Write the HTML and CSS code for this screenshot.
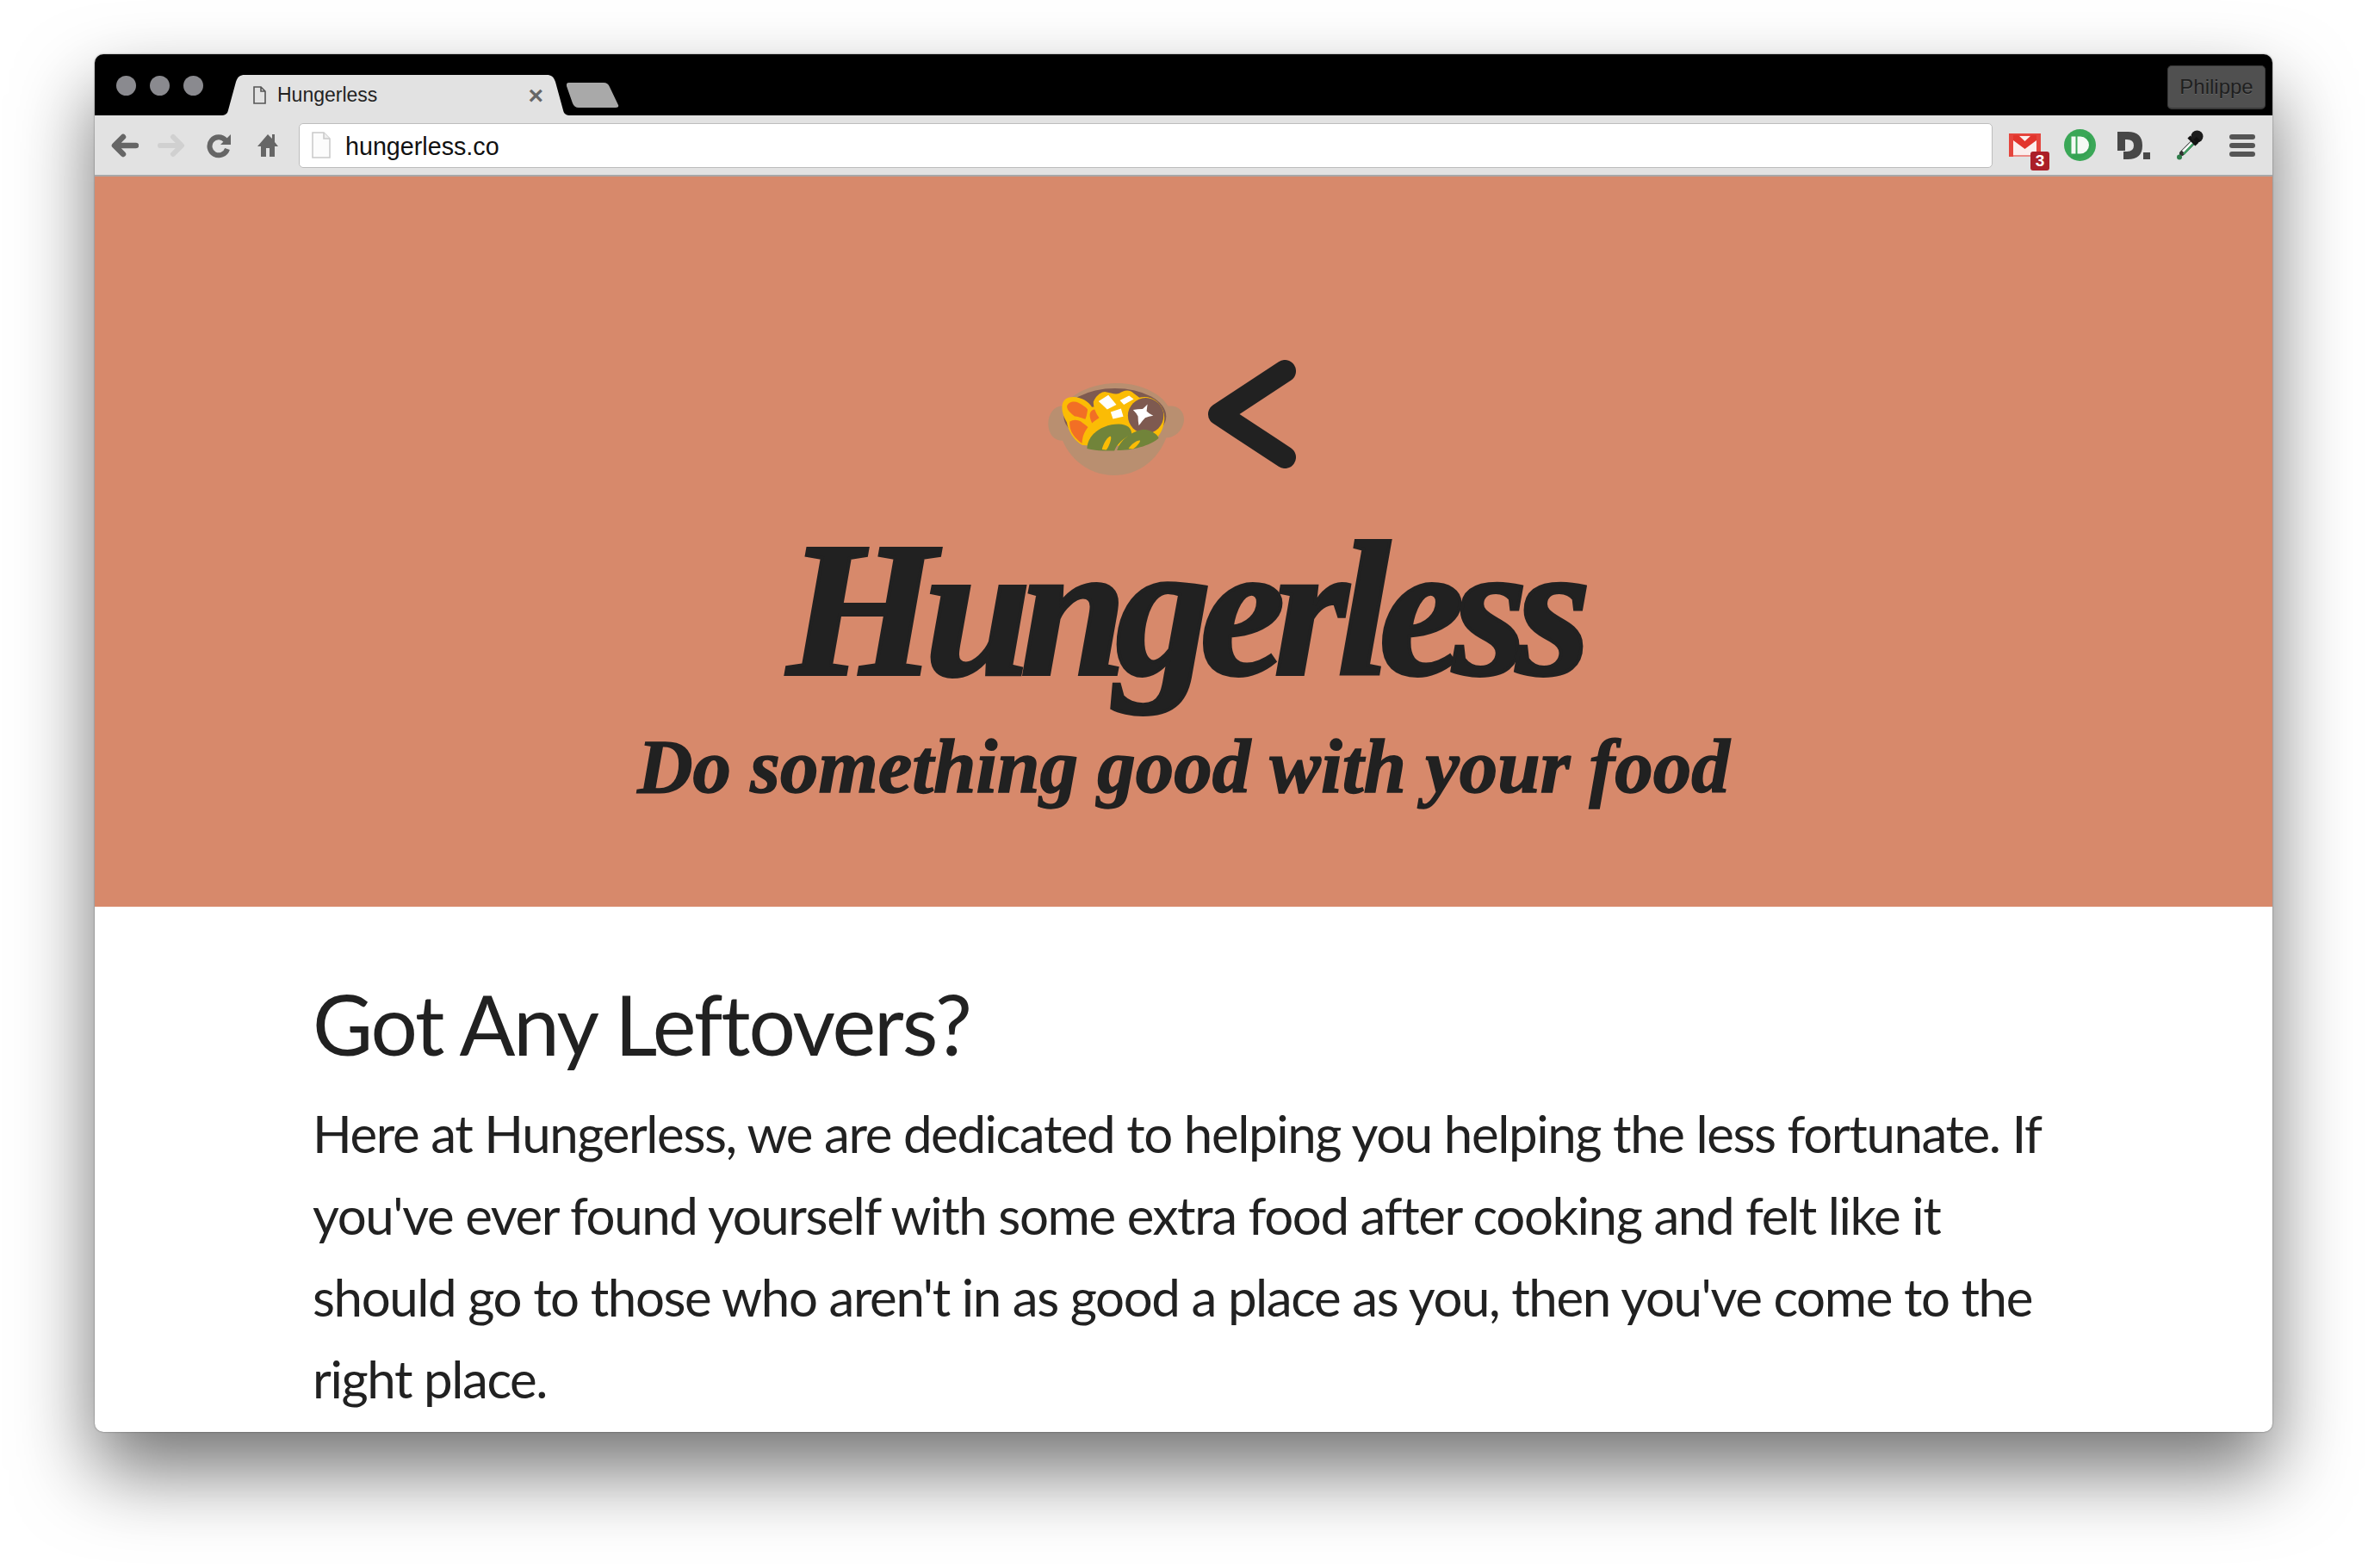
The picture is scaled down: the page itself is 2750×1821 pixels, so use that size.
FILE: index.html
```html
<!DOCTYPE html>
<html>
<head>
  <title>Hungerless</title>
  <link rel="stylesheet" href="styles.css">
</head>
<body>

<div class="window">

  <div class="titlebar">
    <div class="lights">
      <span class="light"></span>
      <span class="light"></span>
      <span class="light"></span>
    </div>
    <div class="tab">
      <svg class="tab-icon" viewBox="0 0 15 21"><path d="M1 1h8l5 5v14H1z M9 1v5h5" fill="none" stroke="#555" stroke-width="1.6"/></svg>
      <span class="tab-title">Hungerless</span>
      <span class="tab-close">&times;</span>
    </div>
    <svg class="new-tab" viewBox="0 0 61 29"><path d="M3 0h40q5 0 7 5l10 21q1 3-3 3H14q-5 0-7-5L0 4q-1-4 3-4z" fill="#a9a9a9"/></svg>
    <div class="profile">Philippe</div>
  </div>

  <div class="toolbar">
    <svg class="tool tool-back" viewBox="0 0 32 30"><path d="M14 5 4 15l10 10M5 15h24" fill="none" stroke="#666" stroke-width="6.500" stroke-linejoin="round" stroke-linecap="round"/></svg>
    <svg class="tool" viewBox="0 0 32 30"><path d="M18 5l10 10-10 10M27 15H3" fill="none" stroke="#d0d0d0" stroke-width="6" stroke-linejoin="round" stroke-linecap="round"/></svg>
    <svg class="tool" viewBox="-2 -1 32 30"><path d="M21 8a10.500 10.500 0 1 0 2 10" fill="none" stroke="#666" stroke-width="6"/><path d="M15 13 27 1v12z" fill="#666"/></svg>
    <svg class="tool tool-home" viewBox="-4 -2 32 30"><path d="M12 0 0 14h4v12h6V16h4v10h6V14h4l-4-5V0h-3v5z" fill="#666"/></svg>

    <div class="omnibox">
      <svg class="omni-icon" viewBox="0 0 22 31"><path d="M1 1h13l7 7v22H1z" fill="#fcfcfc" stroke="#c9c9c9" stroke-width="1.500"/><path d="M14 1v7h7" fill="#eee" stroke="#c9c9c9" stroke-width="1.500"/></svg>
      <span class="url">hungerless.co</span>
    </div>

    <div class="extensions">
      <div class="ext-gmail">
        <svg class="gmail-icon" viewBox="0 0 37 27">
          <rect width="37" height="27" fill="#e5453d"/>
          <rect x="5" y="3" width="27" height="22" fill="#fbeeed"/>
          <path d="M5 25h27v2H5z" fill="#ec8a85"/>
          <path d="M5 2h6l7.500 7L26 2h6v6L18.500 18 5 8z" fill="#e2352d"/>
        </svg>
        <span class="badge">3</span>
      </div>
      <svg class="ext-push" viewBox="0 0 37 37">
        <circle cx="18.500" cy="18.500" r="18.500" fill="#3aa757"/>
        <path d="M29 6A18.500 18.500 0 0 1 8 33.500z" fill="#2f9e4f" opacity=".5"/>
        <rect x="8.500" y="8.500" width="5" height="20" fill="#f4faf5"/>
        <path d="M15.500 8.500h3.500a10 10 0 0 1 0 20h-3.500z" fill="#f4faf5"/>
      </svg>
      <svg class="ext-d" viewBox="0 0 38 32">
        <path d="M0 0h12q17 0 17 16T12 32H7V23h4q8 0 8-7t-8-7H9v13H0z" fill="#474747"/>
        <rect x="30" y="24" width="8" height="8" fill="#474747"/>
      </svg>
      <svg class="ext-dropper" viewBox="0 0 31 35">
        <path d="M18 15 6 27" stroke="#333" stroke-width="6" stroke-linecap="round"/>
        <path d="M18 14 7 25" stroke="#fff" stroke-width="3"/>
        <path d="M19 16 8 28" stroke="#3f9e62" stroke-width="2.500"/>
        <path d="M14 8l9 9" stroke="#111" stroke-width="4.500"/>
        <circle cx="23.500" cy="7.500" r="7" fill="#1c1c1c"/>
        <path d="M19 11l5 5 3-4-4-4z" fill="#111"/>
        <path d="M5 28 1.500 32" stroke="#333" stroke-width="2"/>
        <circle cx="3" cy="31.500" r="3" fill="#2f7d4b"/>
      </svg>
      <div class="menu">
        <span class="menu-bar"></span>
        <span class="menu-bar"></span>
        <span class="menu-bar"></span>
      </div>
    </div>
  </div>

  <div class="hero">
    <div class="logo">
      <svg class="pot" viewBox="112 135 473 320">
        <path d="M165 215c35-50 110-80 185-80s150 30 180 80c30-5 55 15 55 45 0 35-30 65-62 65-30 80-100 130-180 130-85 0-150-50-180-120-35 0-50-30-50-60 0-35 25-65 52-60z" fill="#b98f70"/>
        <ellipse cx="345" cy="250" rx="178" ry="97" fill="#7e5a50"/>
        <path d="M232 350c-30-15-50-50-54-78-18-30-25-65-5-82 30-18 75 0 92 28 30-5 58 15 65 50 10 30-5 60-30 72z" fill="#fbbc05"/>
        <path d="M178 215c5-15 25-20 40-12 15 8 30 18 32 24-2 15-5 28-8 33-15-5-30-10-37-10-12-10-27-20-27-35zM258 240c5-15 20-18 32-8 15 12 28 30 28 43-15 8-30 13-43 15-10-15-20-35-17-50zM188 268c15-8 30-6 45 5 12 8 20 15 22 20-10 10-20 25-23 52-15-10-30-25-38-40-5-12-8-25-6-37z" fill="#f26f25"/>
        <path d="M270 200c10-25 30-35 40-35 20 5 40 10 50 5 15-10 35-15 50 0l20 15c35-10 75 10 85 55 5 20 0 60-25 85-50 25-170 35-260 25 0-50 30-75 60-95-15-20-20-40-20-55z" fill="#fbbc05"/>
        <path d="M288 198 322 176 350 210 318 226zM362 195l32-17 16 12-34 20zM330 235l36-12 8 28-36 8z" fill="#fff"/>
        <circle cx="452" cy="248" r="62" fill="#7e5a50"/>
        <path d="M458 208Q445 222 440 225 425 225 408 228 420 240 425 250 425 265 428 282 440 265 450 255 462 250 478 248 462 240 455 232z" fill="#fff"/>
        <path d="M248 362c0-45 50-85 110-85 30 0 45 15 45 35-20 10-50 30-60 58-30 0-65 0-95-8z" fill="#71843a"/>
        <path d="M352 368c10-35 50-65 90-72 25 0 50 15 55 30-20 22-90 45-145 42z" fill="#71843a"/>
        <path d="M300 365c5-25 25-50 30-45 5 5-5 35-15 47zM392 362c10-15 30-30 40-28 3 5-15 25-25 30z" fill="#fbbc05"/>
      </svg>
      <svg class="less-than" viewBox="0 0 103 126"><path d="M90 13 14 63l76 50" fill="none" stroke="#212121" stroke-width="26" stroke-linecap="round" stroke-linejoin="round"/></svg>
    </div>
    <h1 class="brand">Hungerless</h1>
    <div class="tagline">Do something good with your food</div>
  </div>

  <div class="content">
    <h2>Got Any Leftovers?</h2>
    <p>Here at Hungerless, we are dedicated to helping you helping the less fortunate. If<br>
    you've ever found yourself with some extra food after cooking and felt like it<br>
    should go to those who aren't in as good a place as you, then you've come to the<br>
    right place.</p>
  </div>

</div>

</body>
</html>
```

FILE: styles.css
```css
* {
  margin: 0;
  padding: 0;
  box-sizing: border-box;
}

body {
  background-color: #fff;
  font-family: "Liberation Sans", Arial, sans-serif;
  padding: 63px 111px 0 110px;
  height: 1821px;
  overflow: hidden;
}

.window {
  height: 1600px;
  border-radius: 10px;
  overflow: hidden;
  display: flex;
  flex-direction: column;
  background-color: #fff;
  box-shadow: 0 45px 90px rgba(0, 0, 0, 0.55), 0 0 2px rgba(0, 0, 0, 0.5);
}

/* title bar */
.titlebar {
  height: 71px;
  background-color: #000;
  display: flex;
  align-items: flex-end;
  flex-shrink: 0;
}

.lights {
  display: flex;
  gap: 16px;
  padding-left: 25px;
  align-self: flex-start;
  padding-top: 25px;
  width: 146px;
}

.light {
  width: 23px;
  height: 23px;
  border-radius: 50%;
  background-color: #8a8a8f;
}

.tab {
  width: 407px;
  height: 47px;
  background-color: #e2e2e2;
  clip-path: path("M0 47C6 47 8 45 9 41L18 8C20 2 23 0 28 0H379C384 0 387 2 389 8L398 41C399 45 401 47 407 47Z");
  display: flex;
  align-items: center;
  padding: 0 32px 0 38px;
  margin-right: -5px;
}

.tab-icon {
  width: 15px;
  height: 21px;
  margin-right: 13px;
}

.tab-title {
  font-size: 23px;
  color: #222;
  flex: 1;
}

.tab-close {
  font-size: 30px;
  font-weight: bold;
  color: #666;
}

.new-tab {
  width: 61px;
  height: 29px;
  margin-bottom: 9px;
}

.profile {
  margin-left: auto;
  margin-right: 8px;
  align-self: flex-start;
  margin-top: 13px;
  width: 114px;
  height: 51px;
  background-color: #505050;
  border-radius: 5px;
  border: 1px solid #3a3a3a;
  border-bottom-width: 2px;
  color: #1f1f1f;
  text-shadow: 0 1px 0 #666;
  font-size: 24px;
  display: flex;
  align-items: center;
  justify-content: center;
}

/* toolbar */
.toolbar {
  height: 71px;
  background-color: #e2e2e2;
  border-bottom: 2px solid #a8a8a8;
  display: flex;
  align-items: center;
  padding-left: 19px;
  flex-shrink: 0;
}

.tool {
  width: 32px;
  height: 30px;
  margin-right: 24px;
}

.tool-back {
  margin-right: 22px;
}

.tool-home {
  margin-right: 20px;
}

.omnibox {
  width: 1967px;
  height: 52px;
  background-color: #fff;
  border: 1px solid #bdbdbd;
  border-radius: 5px;
  display: flex;
  align-items: center;
  padding-left: 14px;
}

.omni-icon {
  width: 22px;
  height: 31px;
  margin-right: 17px;
}

.url {
  font-size: 28.700px;
  color: #111;
  padding-top: 3px;
}

.extensions {
  display: flex;
  align-items: center;
  margin-left: 19px;
}

.ext-gmail {
  position: relative;
  width: 37px;
  height: 27px;
  margin-right: 27px;
}

.gmail-icon {
  display: block;
  width: 37px;
  height: 27px;
}

.badge {
  position: absolute;
  left: 25px;
  top: 21px;
  width: 22px;
  height: 22px;
  border-radius: 3px;
  background-color: #ab1f28;
  color: #fff;
  font-size: 19px;
  font-weight: bold;
  text-align: center;
  line-height: 22px;
}

.ext-push {
  width: 37px;
  height: 37px;
  margin-right: 25px;
}

.ext-d {
  width: 38px;
  height: 32px;
  margin-right: 31px;
}

.ext-dropper {
  width: 31px;
  height: 35px;
  margin-right: 30px;
}

.menu {
  display: flex;
  flex-direction: column;
  gap: 4px;
  width: 30px;
}

.menu-bar {
  height: 6px;
  border-radius: 3px;
  background-color: #555;
}

/* hero */
.hero {
  height: 848px;
  background-color: #d7896b;
  display: flex;
  flex-direction: column;
  align-items: center;
  color: #212121;
  flex-shrink: 0;
  padding-top: 213px;
}

.logo {
  display: flex;
  align-items: center;
  gap: 27px;
  padding-right: 27px;
  height: 126px;
}

.pot {
  width: 158px;
  height: 107px;
  margin-top: 34px;
}

.less-than {
  width: 103px;
  height: 126px;
}

.brand {
  font-family: "Liberation Serif", serif;
  font-style: italic;
  font-weight: bold;
  font-size: 222px;
  line-height: 240px;
  letter-spacing: -12.800px;
  margin-top: 44px;
  -webkit-text-stroke: 4px #212121;
}

.tagline {
  font-family: "Liberation Serif", serif;
  font-style: italic;
  font-weight: bold;
  font-size: 89px;
  line-height: 100px;
  -webkit-text-stroke: 1.500px #212121;
  margin-top: 12px;
}

/* text under the hero */
.content {
  padding: 81px 0 0 253px;
  color: #212121;
  font-family: Lato, sans-serif;
  overflow: hidden;
}

.content h2 {
  font-weight: normal;
  font-size: 96px;
  line-height: 110px;
  letter-spacing: -2.100px;
}

.content p {
  font-size: 60px;
  line-height: 95px;
  margin-top: 25px;
  letter-spacing: -1.400px;
  white-space: nowrap;
}
```
